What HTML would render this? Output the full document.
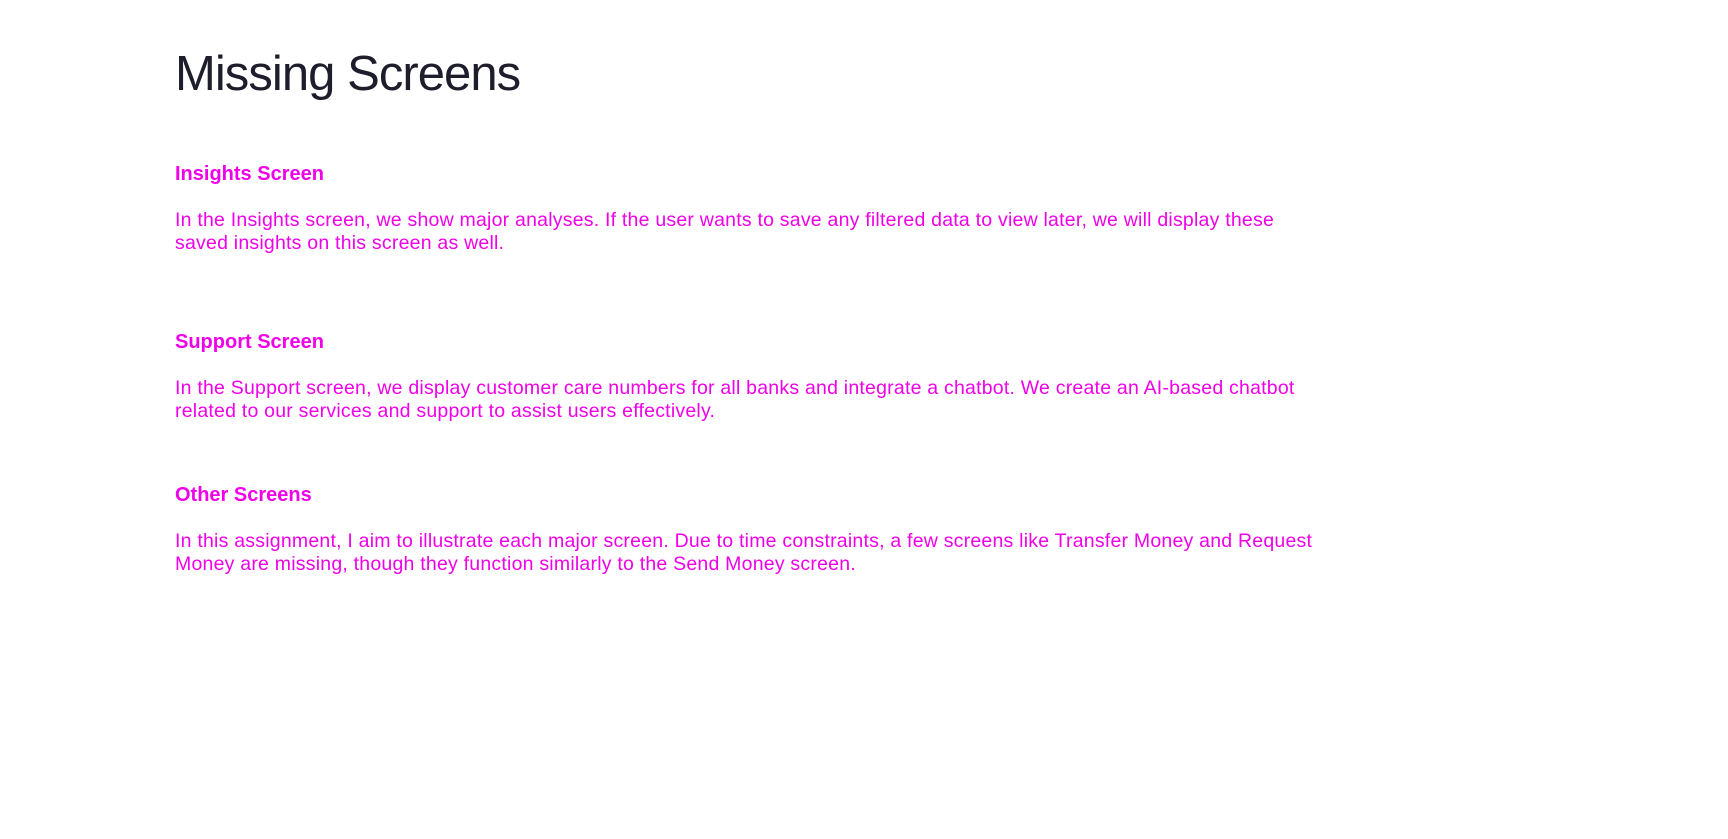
<!DOCTYPE html>
<html><head><meta charset="utf-8"><style>
html,body{margin:0;padding:0;background:#fff;width:1728px;height:839px;overflow:hidden}
body{font-family:"Liberation Sans",Arial,sans-serif;position:relative}
.t{position:absolute;left:175px;white-space:nowrap}
h1{position:absolute;left:175px;top:46px;margin:0;font-weight:normal;font-size:49px;line-height:56px;color:#1d1d2b;letter-spacing:-0.95px}
.h{font-weight:bold;font-size:20px;line-height:23px;color:#f000e8}
.b{font-size:19.5px;line-height:23px;color:#f000e8;letter-spacing:0.22px}
</style></head><body>
<h1>Missing Screens</h1>
<div class="t h" style="top:163px">Insights Screen</div>
<div class="t b" style="top:209px">In the Insights screen, we show major analyses. If the user wants to save any filtered data to view later, we will display these<br>saved insights on this screen as well.</div>
<div class="t h" style="top:331px">Support Screen</div>
<div class="t b" style="top:377px">In the Support screen, we display customer care numbers for all banks and integrate a chatbot. We create an AI-based chatbot<br>related to our services and support to assist users effectively.</div>
<div class="t h" style="top:484px">Other Screens</div>
<div class="t b" style="top:530px">In this assignment, I aim to illustrate each major screen. Due to time constraints, a few screens like Transfer Money and Request<br>Money are missing, though they function similarly to the Send Money screen.</div>
</body></html>
